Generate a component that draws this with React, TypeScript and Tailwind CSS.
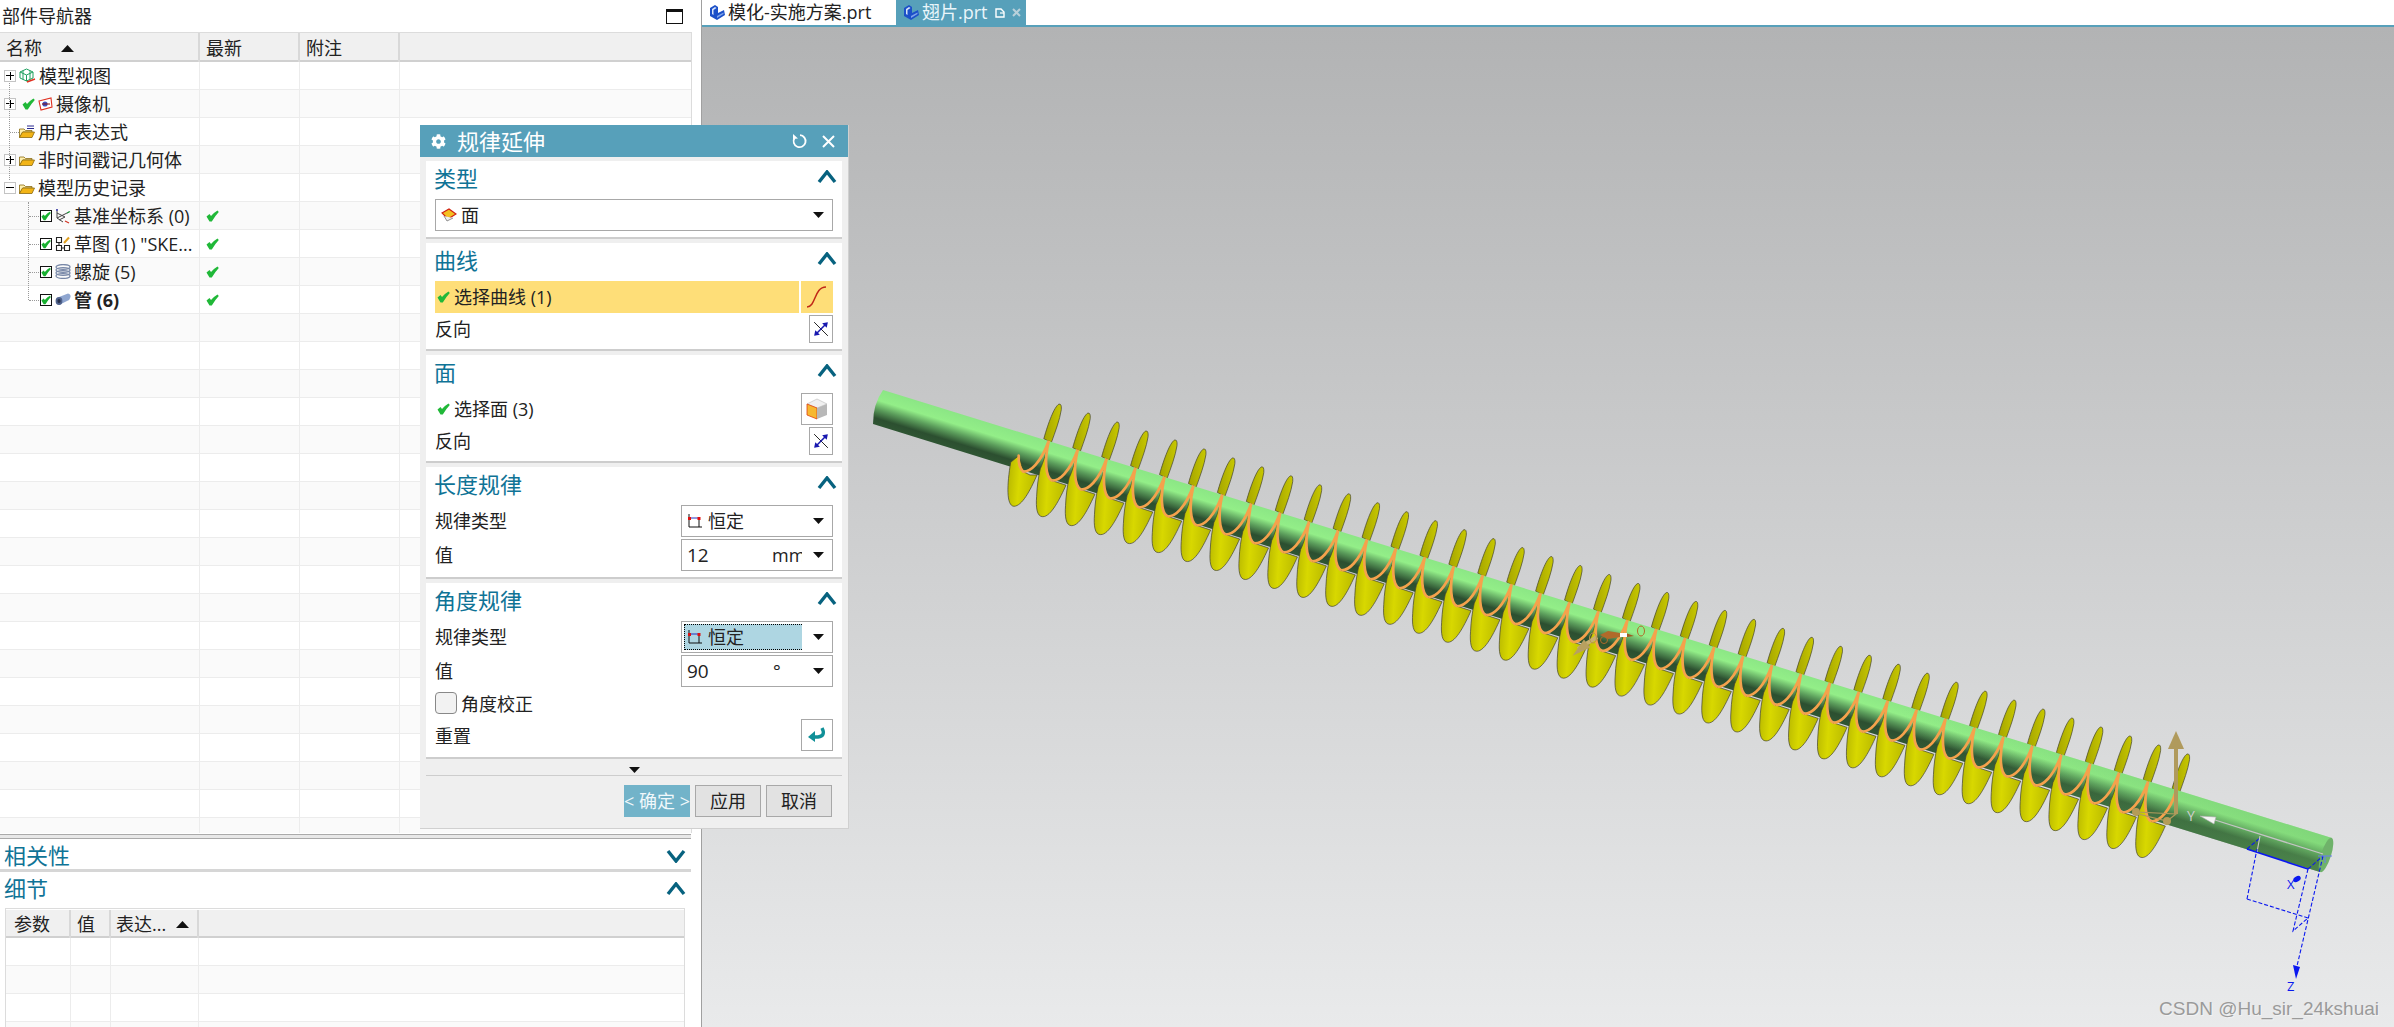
import { FaCog } from 'react-icons/fa';

const FONT = "[font-family:'Open_Sans','Noto_Sans_CJK_SC',sans-serif]";
const TICK = 'M0.5 6.5 L3.5 4 L5 6 Q8 2.5 11.5 0.5 L12.8 2 Q9 6 5.8 11.5 L3.5 11.5 Z';

const Check = ({ className = '' }: { className?: string }) => (
  <svg width="13" height="12" viewBox="0 0 13 12" className={`shrink-0 ${className}`}>
    <path d={TICK} fill="#20b838" />
  </svg>
);

const Expander = ({ open }: { open?: boolean }) => (
  <span className="relative flex h-[12px] w-[12px] shrink-0 items-center justify-center border border-[#c4c4c4] bg-white">
    <span className="h-px w-[8px] bg-black" />
    {!open && <span className="absolute h-[8px] w-px bg-black" />}
  </span>
);

const CheckBox = () => (
  <span className="flex h-[12px] w-[12px] shrink-0 items-center justify-center border border-[#111] bg-white">
    <svg width="11" height="10" viewBox="0 0 13 12">
      <path d={TICK} fill="#18b030" />
    </svg>
  </span>
);

const Folder = ({ lines }: { lines?: boolean }) => (
  <svg width="16" height="14" viewBox="0 0 16 14" className="shrink-0">
    {lines && <path d="M8 1 H15 M8 3.5 H15" stroke="#2a2a90" strokeWidth="1" />}
    <path d="M0.5 12.5 V4 H5 L6.5 5.5 H13 V7 H4 Z" fill="#fff0b0" stroke="#8a6a10" strokeWidth="0.8" />
    <path d="M0.5 12.5 L3.5 7 H15.5 L13 12.5 Z" fill="#f2b416" stroke="#8a6a10" strokeWidth="0.8" />
  </svg>
);

const ViewIcon = () => (
  <svg width="17" height="16" viewBox="0 0 17 16" className="shrink-0">
    <path d="M7.5 1 L14 4 V10 L7.5 13 L1 10 V4 Z M1 4 L7.5 7 L14 4 M7.5 7 V13 M4 2.5 V11.5 M11 2.5 V11.5" fill="none" stroke="#20a060" strokeWidth="1" />
    <path d="M8 14 L16 11" stroke="#e03020" strokeWidth="1.6" />
  </svg>
);

const CameraIcon = () => (
  <svg width="15" height="14" viewBox="0 0 15 14" className="shrink-0">
    <path d="M1 4 L13 1 L14 10 L3 13 Z" fill="#fff" stroke="#e03020" strokeWidth="1.1" />
    <circle cx="7" cy="7" r="2.6" fill="#4050c0" />
    <path d="M4 7 H12" stroke="#801010" strokeWidth="1" />
  </svg>
);

const DatumIcon = () => (
  <svg width="16" height="16" viewBox="0 0 16 16" className="shrink-0">
    <path d="M2 1 V10 L8 14 M2 10 L14 4 M2 5 L10 9 L4 12" fill="none" stroke="#444" strokeWidth="1" />
    <path d="M2 1 V3" stroke="#3030c0" strokeWidth="1.2" />
    <path d="M12 5 L15 3.5" stroke="#20a040" strokeWidth="1.2" />
    <path d="M10 13 L14 15" stroke="#d03020" strokeWidth="1.2" />
  </svg>
);

const SketchIcon = () => (
  <svg width="16" height="16" viewBox="0 0 16 16" className="shrink-0">
    <path d="M1.5 1.5 H6.5 V6.5 H1.5 Z M1.5 9.5 H6.5 V14.5 H1.5 Z M9.5 9.5 H14.5 V14.5 H9.5 Z M4 6.5 V9.5 M6.5 12 H9.5" fill="none" stroke="#222" strokeWidth="1.1" />
    <path d="M9 7 L14 1.5" stroke="#e0a020" strokeWidth="2" />
  </svg>
);

const HelixIcon = () => (
  <svg width="16" height="15" viewBox="0 0 16 15" className="shrink-0">
    {[3, 6, 9, 12].map(y => (
      <ellipse key={y} cx="8" cy={y} rx="7" ry="2.4" fill="none" stroke="#7888a8" strokeWidth="1.3" />
    ))}
  </svg>
);

const TubeIcon = () => (
  <svg width="16" height="13" viewBox="0 0 16 13" className="shrink-0">
    <path d="M4 4 L13 0.5 Q16 1 15.5 4 Q15 7 12 8 L4 12 Z" fill="#8fa6d0" />
    <ellipse cx="4" cy="8" rx="3.4" ry="4" fill="#50628c" />
    <ellipse cx="4" cy="8" rx="1.6" ry="2" fill="#26304c" />
  </svg>
);

const Triangle = ({ className = '' }: { className?: string }) => (
  <svg width="11" height="6" viewBox="0 0 11 6" className={`shrink-0 ${className}`}>
    <path d="M0 0 H11 L5.5 6 Z" fill="#111" />
  </svg>
);

const SortUp = ({ className = '' }: { className?: string }) => (
  <svg width="13" height="7" viewBox="0 0 13 7" className={className}>
    <path d="M0 7 H13 L6.5 0 Z" fill="#111" />
  </svg>
);

const Chevron = ({ down }: { down?: boolean }) => (
  <svg width="20" height="14" viewBox="0 0 20 14">
    <path d={down ? 'M2 2 L10 12 L18 2' : 'M2 12 L10 2 L18 12'} fill="none" stroke="#07627f" strokeWidth="3.4" />
  </svg>
);

const LawIcon = () => (
  <svg width="16" height="16" viewBox="0 0 16 16" className="shrink-0">
    <path d="M2 1 V14 H15" fill="none" stroke="#111" strokeWidth="1" />
    <path d="M12 5 V14" fill="none" stroke="#111" strokeWidth="1" />
    <path d="M2 5 H12" stroke="#2030c0" strokeWidth="1" />
    <rect x="1" y="4" width="3" height="3" fill="#e01010" />
    <rect x="10.5" y="4" width="3" height="3" fill="#e01010" />
  </svg>
);

const FaceIcon = () => (
  <svg width="16" height="14" viewBox="0 0 16 14" className="shrink-0">
    <path d="M1 5 L8 1 L15 6 L7 11 Z" fill="#f4c020" stroke="#d02010" strokeWidth="1.2" />
    <path d="M3 8 L6 13 L12 10" fill="#eee" stroke="#777" strokeWidth="0.8" />
  </svg>
);

const ReverseBtn = () => (
  <span className="flex h-[28px] w-[24px] items-center justify-center border border-[#a8a8a8] bg-white">
    <svg width="16" height="16" viewBox="0 0 14 14">
      <path d="M1 1 L13 13" stroke="#111" strokeWidth="0.8" />
      <path d="M2 12 L12 2" stroke="#1818b0" strokeWidth="1.3" />
      <path d="M13 1 L8 2 L12 6 Z M1 13 L6 12 L2 8 Z" fill="#1818b0" />
    </svg>
  </span>
);

const Select = ({ children }: { children: React.ReactNode }) => (
  <div className="flex h-[32px] w-[152px] items-center border border-[#a8a8a8] bg-white pr-[8px]">
    <div className="flex h-full min-w-0 flex-1 items-center overflow-hidden">{children}</div>
    <Triangle className="ml-[11px]" />
  </div>
);

const Section = ({ title, children }: { title: string; children: React.ReactNode }) => (
  <section className="mt-[4px] border-b-2 border-[#cdcdcd] bg-white pb-[6px]">
    <div className="flex h-[38px] items-start justify-between pl-[8px] pr-[5px] pt-[3px]">
      <span className="text-[22px] leading-[28px] text-[#0f7396]">{title}</span>
      <span className="pt-[6px]"><Chevron /></span>
    </div>
    <div className="flex flex-col gap-[2px] pl-[9px] pr-[9px]">{children}</div>
  </section>
);

const treeRows = [
  { indent: 'pl-[4px]', exp: 'plus', icon: <ViewIcon />, label: '模型视图' },
  { indent: 'pl-[4px]', exp: 'plus', check: true, icon: <CameraIcon />, label: '摄像机' },
  { indent: 'pl-[19px]', icon: <Folder lines />, label: '用户表达式' },
  { indent: 'pl-[4px]', exp: 'plus', icon: <Folder />, label: '非时间戳记几何体' },
  { indent: 'pl-[4px]', exp: 'minus', icon: <Folder />, label: '模型历史记录' },
  { indent: 'pl-[40px]', box: true, icon: <DatumIcon />, label: '基准坐标系 (0)', ok: true },
  { indent: 'pl-[40px]', box: true, icon: <SketchIcon />, label: '草图 (1) "SKE...', ok: true },
  { indent: 'pl-[40px]', box: true, icon: <HelixIcon />, label: '螺旋 (5)', ok: true },
  { indent: 'pl-[40px]', box: true, icon: <TubeIcon />, label: '管 (6)', ok: true, bold: true },
];

const rowIds = Array.from({ length: 28 }, (_, i) => i);

function Navigator() {
  return (
    <aside className="flex h-full w-[702px] shrink-0 flex-col border-r border-[#a0a0a0] bg-white">
      <div className="flex h-[32px] shrink-0 items-center justify-between pl-[2px] pr-[18px] pt-px text-[18px] text-[#222]">
        <span>部件导航器</span>
        <span className="h-[15px] w-[17px] border border-t-[3px] border-[#111]" />
      </div>
      <div className="flex h-[801px] w-[692px] flex-col overflow-hidden border-r border-t border-[#dcdcdc]">
        <div className="grid h-[29px] shrink-0 grid-cols-[200px_100px_100px_1fr] border-b-2 border-[#d0d0d0] bg-[#f0f0f0] text-[18px] text-[#222]">
          <div className="flex items-center border-r-2 border-[#d8d8d8] pl-[6px] pt-[2px]">
            <span>名称</span>
            <SortUp className="ml-[19px]" />
          </div>
          <div className="flex items-center border-r-2 border-[#d8d8d8] pl-[6px] pt-[2px]">最新</div>
          <div className="flex items-center border-r-2 border-[#d8d8d8] pl-[6px] pt-[2px]">附注</div>
          <div />
        </div>
        <div className="relative flex-1">
          {rowIds.map(i => {
            const r = treeRows[i];
            return (
              <div key={i} className={`grid h-[28px] grid-cols-[200px_100px_100px_1fr] border-b border-[#ececec] text-[18px] text-[#222] ${i % 2 ? 'bg-[#fafafa]' : 'bg-white'}`}>
                <div className={`flex items-center gap-[3px] overflow-hidden whitespace-nowrap border-r border-[#ececec] ${r ? r.indent : ''}`}>
                  {r && r.exp && <Expander open={r.exp === 'minus'} />}
                  {r && r.check && <Check className="ml-[3px]" />}
                  {r && r.box && <CheckBox />}
                  {r && <span className="flex shrink-0 items-center">{r.icon}</span>}
                  {r && <span className={`pt-[2px] ${r.bold ? 'font-bold' : ''}`}>{r.label}</span>}
                </div>
                <div className="flex items-center border-r border-[#ececec] pl-[6px]">
                  {r && r.ok && <Check />}
                </div>
                <div className="border-r border-[#ececec]" />
                <div />
              </div>
            );
          })}
          <div className="absolute left-[9px] top-[21px] h-[97px] border-l border-dotted border-[#999]" />
          <div className="absolute left-[10px] top-[70px] w-[9px] border-t border-dotted border-[#999]" />
          <div className="absolute left-[28px] top-[140px] h-[98px] border-l border-dotted border-[#999]" />
          <div className="absolute left-[29px] top-[154px] w-[10px] border-t border-dotted border-[#999]" />
          <div className="absolute left-[29px] top-[182px] w-[10px] border-t border-dotted border-[#999]" />
          <div className="absolute left-[29px] top-[210px] w-[10px] border-t border-dotted border-[#999]" />
          <div className="absolute left-[29px] top-[238px] w-[10px] border-t border-dotted border-[#999]" />
        </div>
      </div>
      <div className="mt-[1px] h-[5px] w-[691px] shrink-0 border-y border-[#aaaaaa] bg-[#e8e8e8]" />
      <div className="flex h-[30px] w-[691px] shrink-0 items-center justify-between pl-[4px] pr-[5px] pt-[3px] text-[22px] text-[#0f7396]">
        <span>相关性</span>
        <Chevron down />
      </div>
      <div className="h-[3px] w-[691px] shrink-0 bg-[#d6d6d6]" />
      <div className="flex h-[36px] w-[691px] shrink-0 items-center justify-between pb-[3px] pl-[4px] pr-[5px] text-[22px] text-[#0f7396]">
        <span>细节</span>
        <Chevron />
      </div>
      <div className="ml-[5px] flex w-[680px] flex-1 flex-col overflow-hidden border-x border-t border-[#dcdcdc] pt-px text-[18px] text-[#222]">
        <div className="grid h-[28px] shrink-0 grid-cols-[65px_40px_88px_1fr] border-b-2 border-[#d0d0d0] bg-[#f0f0f0]">
          <div className="flex items-center border-r-2 border-[#d8d8d8] pl-[8px] pt-px">参数</div>
          <div className="flex items-center border-r-2 border-[#d8d8d8] pl-[6px] pt-px">值</div>
          <div className="flex items-center border-r-2 border-[#d8d8d8] pl-[5px] pt-px">
            <span>表达...</span>
            <SortUp className="ml-[10px]" />
          </div>
          <div />
        </div>
        {[0, 1, 2, 3].map(i => (
          <div key={i} className={`grid h-[28px] shrink-0 grid-cols-[65px_40px_88px_1fr] border-b border-[#ececec] ${i % 2 ? 'bg-[#fafafa]' : 'bg-white'}`}>
            <div className="border-r border-[#ececec]" />
            <div className="border-r border-[#ececec]" />
            <div className="border-r border-[#ececec]" />
            <div />
          </div>
        ))}
      </div>
    </aside>
  );
}

const PartIcon = () => (
  <svg width="17" height="17" viewBox="0 0 17 17" className="shrink-0">
    <path d="M1 4 L6 1 L9 3 V9 L15 6 L16 11 L8 16 L1 12 Z" fill="#1c50c8" />
    <path d="M3 5 L6 3 L7.5 4 L4.5 6 V11 L3 10 Z" fill="#d8e4fa" />
    <path d="M8 14 L14.5 10 V8.5 L8 12 Z" fill="#7fa4ea" />
  </svg>
);

function Tabs() {
  return (
    <div className="flex h-[27px] shrink-0 items-stretch border-b-2 border-[#57a0ba] bg-white text-[18px]">
      <div className="flex w-[194px] items-center gap-[2px] pl-[7px] text-[#222]">
        <PartIcon />
        <span>模化-实施方案.prt</span>
      </div>
      <div className="flex w-[130px] items-center bg-[#57a0ba] pl-[7px] text-[#eaf6fa]">
        <PartIcon />
        <span className="ml-[2px]">翅片.prt</span>
        <svg width="10" height="10" viewBox="0 0 10 10" className="ml-[7px]">
          <path d="M1 1 H6 L9 4 V9 H1 Z" fill="none" stroke="#fff" strokeWidth="1.4" />
          <path d="M5 5 H9" stroke="#fff" strokeWidth="1.2" />
        </svg>
        <svg width="9" height="9" viewBox="0 0 9 9" className="ml-[7px]">
          <path d="M1 1 L8 8 M8 1 L1 8" stroke="#b8d0da" strokeWidth="2" />
        </svg>
      </div>
    </div>
  );
}

// one helix period, measured from the low point of the orange curve
const STEP_X = 28.93;
const STEP_Y = 8.97;
const LOBE = 'M25.5 -31 C21 -12 22 6 28.93 8.97 L42.7 13.5 C37 26 28 45 19.5 45 C13.5 45 12.5 36 13.3 25 C13.8 14 15 6 17 -3 C20 -9 23 -20 25.5 -31 Z';
const TIP = 'M20.5 -33 C25 -49 31 -65 35.5 -67.5 Q38.5 -68.5 38 -62 C36.5 -52 32 -40 28 -29 Z';
const WIRE = 'M0 0 C7 0 17 -8 25.5 -31 C21 -12 22 6 28.93 8.97';
const periods = Array.from({ length: 39 }, (_, i) => i);
const tips = Array.from({ length: 40 }, (_, i) => i);
const at = (i: number) => `translate(${1023.3 + STEP_X * i} ${472.7 + STEP_Y * i})`;

function Model() {
  return (
    <svg width="1692" height="998" viewBox="702 29 1692 998" className="block h-full w-full">
      <defs>
        <linearGradient id="pipe" gradientUnits="userSpaceOnUse" x1="883" y1="391" x2="872.6" y2="424.8">
          <stop offset="0" stopColor="#8be685" />
          <stop offset="0.32" stopColor="#93ee88" />
          <stop offset="0.56" stopColor="#5c9e5c" />
          <stop offset="0.82" stopColor="#2c4f30" />
          <stop offset="1" stopColor="#2f5533" />
        </linearGradient>
        <linearGradient id="pipeGlow" gradientUnits="userSpaceOnUse" x1="1900" y1="0" x2="2330" y2="0">
          <stop offset="0" stopColor="#6fc06a" stopOpacity="0" />
          <stop offset="1" stopColor="#6fc06a" stopOpacity="0.45" />
        </linearGradient>
        <linearGradient id="lobe" x1="0" y1="0" x2="1" y2="0.15">
          <stop offset="0" stopColor="#b4b400" />
          <stop offset="0.45" stopColor="#d8d800" />
          <stop offset="1" stopColor="#bcbc00" />
        </linearGradient>
        <linearGradient id="tip" x1="0" y1="0" x2="1" y2="0">
          <stop offset="0" stopColor="#a4a400" />
          <stop offset="1" stopColor="#c8c800" />
        </linearGradient>
      </defs>

      {tips.map(i => (
        <path key={i} d={TIP} transform={at(i)} fill="url(#tip)" stroke="#444430" strokeWidth="0.7" />
      ))}

      <path d="M883 391 L2332 839 Q2326 858 2320 873 L873 425 Q873 405 883 391 Z" fill="url(#pipe)" />
      <path d="M883 391 L2332 839 Q2326 858 2320 873 L873 425 Q873 405 883 391 Z" fill="url(#pipeGlow)" />
      <ellipse cx="2326" cy="856" rx="5" ry="18" transform="rotate(18 2326 856)" fill="#6fb26a" />

      <path d="M1018.7 456.7 L1010.7 463.3 C1007 485 1006 507 1014 507.3 C1022 507 1030 492 1037 476 L1030 476 L1023.3 472.7 Z" fill="url(#lobe)" stroke="#444430" strokeWidth="0.7" />
      {periods.map(i => (
        <path key={i} d={LOBE} transform={at(i)} fill="url(#lobe)" stroke="#444430" strokeWidth="0.7" />
      ))}

      <path d="M1018.7 456.7 Q1018 468 1023.3 472.7" fill="none" stroke="#f5a24c" strokeWidth="2.7" strokeLinecap="round" />
      {periods.map(i => (
        <path key={i} d={WIRE} transform={at(i)} fill="none" stroke="#f5a24c" strokeWidth="2.7" />
      ))}
      <path d="M2151.6 822.5 C2160 822 2170 812 2176 792" fill="none" stroke="#f5a24c" strokeWidth="2.7" />

      {/* manipulator mid way */}
      <path d="M1578 650 L1597 638" stroke="#c8b070" strokeWidth="4" />
      <path d="M1577 653 L1584 643 L1588 648 Z" fill="#b8a060" stroke="#b8a060" strokeWidth="3" />
      <path d="M1600 636 L1608 632 L1620 634 V638 L1608 640 Z" fill="#b06a2a" />
      <path d="M1620 636 H1627" stroke="#fff" strokeWidth="4" />
      <path d="M1627 634.5 L1634 637 L1627 638 Z" fill="#a05a20" />
      <ellipse cx="1593" cy="639" rx="3.5" ry="5" fill="none" stroke="#b89050" />
      <ellipse cx="1604" cy="641" rx="3.5" ry="3.5" fill="none" stroke="#b06a2a" />
      <ellipse cx="1641" cy="632" rx="3.5" ry="5" fill="none" stroke="#b06a2a" />

      {/* manipulator at the pipe end */}
      <path d="M2176 815 V750" stroke="#b09a5c" strokeWidth="4" />
      <path d="M2176 732 L2184 750 H2168 Z" fill="#b09a5c" />
      <path d="M2136 813 L2176 815 L2167 822 L2138 815" fill="none" stroke="#b09a5c" strokeWidth="1.2" />
      <circle cx="2136" cy="813" r="4" fill="#b49c58" />
      <circle cx="2167" cy="822" r="4" fill="#b49c58" />

      {/* wcs */}
      <path d="M2323 855 L2215 821" stroke="#c4c4c4" strokeWidth="1.3" />
      <path d="M2200 817 L2216 818 L2214 825 Z" fill="#f4f4f4" stroke="#aaa" strokeWidth="0.6" />
      <text x="2187" y="822" fontSize="14" fill="#d0d0d0">Y</text>
      <path d="M2247 850 L2260 839" stroke="#0a18f0" strokeWidth="1.2" strokeDasharray="4 2" />
      <path d="M2247 850 L2308 870" stroke="#0a18f0" strokeWidth="1.6" />
      <path d="M2260 837 L2257 853" stroke="#c8c8c8" strokeWidth="1.2" />
      <path d="M2247 900 L2257 850 M2247 900 L2308 919 M2308 870 L2293 932 L2308 919 M2323 857 L2297 967 M2308 870 L2323 857" fill="none" stroke="#0a18f0" strokeWidth="1.1" strokeDasharray="4 2" />
      <path d="M2296 980 L2293 966 L2300 968 Z" fill="#0a18f0" />
      <ellipse cx="2297" cy="880" rx="4" ry="2.6" transform="rotate(-30 2297 880)" fill="#0a18f0" />
      <text x="2287" y="890" fontSize="13" fill="#0a18f0">X</text>
      <text x="2287" y="992" fontSize="13" fill="#0a18f0">Z</text>
      <path d="M2318 857 H2332 M2325 857 V864" stroke="#6a7cf0" strokeWidth="1" />
    </svg>
  );
}

function Dialog() {
  return (
    <div className="absolute left-[420px] top-[125px] flex h-[704px] w-[429px] flex-col border-b border-r border-[#d0d0d0] bg-[#efefef] text-[18px] text-[#222]">
      <div className="flex h-[32px] shrink-0 items-center bg-[#57a0ba] pl-[11px] pr-[13px] text-white">
        <FaCog size={15} />
        <span className="ml-[11px] text-[22px] leading-none">规律延伸</span>
        <svg width="16" height="16" viewBox="0 0 16 16" className="ml-auto">
          <path d="M2.5 5 A6 6 0 1 0 8 2.2" fill="none" stroke="#fff" strokeWidth="1.8" />
          <path d="M1 1 L6 5.5 L1 6 Z" fill="#fff" />
        </svg>
        <svg width="13" height="13" viewBox="0 0 13 13" className="ml-[14px]">
          <path d="M1 1 L12 12 M12 1 L1 12" stroke="#fff" strokeWidth="2" />
        </svg>
      </div>
      <div className="flex flex-1 flex-col pl-[6px] pr-[6px]">
        <Section title="类型">
          <div className="flex h-[32px] items-center border border-[#a8a8a8] bg-white pl-[5px] pr-[8px]">
            <FaceIcon />
            <span className="ml-[4px]">面</span>
            <Triangle className="ml-auto" />
          </div>
        </Section>
        <Section title="曲线">
          <div className="flex h-[32px] gap-[2px]">
            <div className="flex flex-1 items-center bg-[#fede78] pl-[2px]">
              <Check />
              <span className="ml-[4px]">选择曲线 (1)</span>
            </div>
            <div className="flex w-[32px] items-center justify-center bg-[#fede78]">
              <svg width="22" height="24" viewBox="0 0 22 24">
                <path d="M1 22 C10 22 8 2 20 2" fill="none" stroke="#c02818" strokeWidth="1.5" />
              </svg>
            </div>
          </div>
          <div className="flex items-center justify-between">
            <span>反向</span>
            <ReverseBtn />
          </div>
        </Section>
        <Section title="面">
          <div className="flex h-[32px] items-center justify-between">
            <div className="flex items-center pl-[2px]">
              <Check />
              <span className="ml-[4px]">选择面 (3)</span>
            </div>
            <span className="flex h-[32px] w-[32px] items-center justify-center border border-[#a8a8a8] bg-white">
              <svg width="22" height="22" viewBox="0 0 22 22">
                <path d="M1 6 L11 1 L21 6 L11 10 Z" fill="#f0f0f0" stroke="#bbb" strokeWidth="0.6" />
                <path d="M1 6 L11 10 V21 L1 17 Z" fill="#f6b830" stroke="#e04010" strokeWidth="0.8" />
                <path d="M21 6 L11 10 V21 L21 17 Z" fill="#b8b8b8" />
              </svg>
            </span>
          </div>
          <div className="flex items-center justify-between">
            <span>反向</span>
            <ReverseBtn />
          </div>
        </Section>
        <Section title="长度规律">
          <div className="flex items-center justify-between">
            <span className="pt-px">规律类型</span>
            <Select>
              <span className="ml-[5px]"><LawIcon /></span>
              <span className="ml-[5px] pt-px">恒定</span>
            </Select>
          </div>
          <div className="flex items-center justify-between">
            <span className="pt-px">值</span>
            <Select>
              <span className="ml-[5px] w-[85px] shrink-0 text-[19px]">12</span>
              <span className="w-[31px] shrink-0 overflow-hidden pt-px">mm</span>
            </Select>
          </div>
        </Section>
        <Section title="角度规律">
          <div className="flex items-center justify-between">
            <span className="pt-px">规律类型</span>
            <Select>
              <div className="ml-[2px] flex h-[26px] w-[120px] shrink-0 items-center border border-dotted border-black bg-[#aed6e2] pl-[2px]">
                <LawIcon />
                <span className="ml-[5px] pt-px">恒定</span>
              </div>
            </Select>
          </div>
          <div className="flex items-center justify-between">
            <span className="pt-px">值</span>
            <Select>
              <span className="ml-[5px] w-[86px] shrink-0 text-[19px]">90</span>
              <span className="shrink-0">°</span>
            </Select>
          </div>
          <div className="mt-[3px] flex h-[22px] items-center">
            <span className="h-[22px] w-[22px] rounded-[4px] border border-[#888] bg-[#f2f2f2]" />
            <span className="ml-[4px] pt-[2px]">角度校正</span>
          </div>
          <div className="mt-[3px] flex items-center justify-between">
            <span className="pt-[2px]">重置</span>
            <span className="flex h-[32px] w-[32px] items-center justify-center border border-[#a8a8a8] bg-white">
              <svg width="20" height="16" viewBox="0 0 20 16">
                <path d="M15 1 Q19 9 11 10 H7" fill="none" stroke="#109098" strokeWidth="3.4" />
                <path d="M8 4 L1 10 L8 15 Z" fill="#109098" />
              </svg>
            </span>
          </div>
        </Section>
        <div className="flex h-[17px] shrink-0 items-center justify-center border-b border-[#cdcdcd] pt-[5px]">
          <Triangle />
        </div>
        <div className="mt-[9px] flex h-[32px] shrink-0 justify-end gap-[5px] pr-[10px]">
          <button className="flex w-[66px] items-center justify-between bg-[#72b3c9] pt-px text-[#f0f8fb]">
            <span>&lt;</span>
            <span>确定</span>
            <span>&gt;</span>
          </button>
          <button className="w-[66px] border border-[#a8a8a8] bg-[#e2e2e2] pt-px">应用</button>
          <button className="w-[66px] border border-[#a8a8a8] bg-[#e2e2e2] pt-px">取消</button>
        </div>
      </div>
    </div>
  );
}

export default function App() {
  return (
    <div className={`relative flex h-[1027px] w-[2394px] overflow-hidden bg-white ${FONT}`}>
      <Navigator />
      <main className="flex min-w-0 flex-1 flex-col">
        <Tabs />
        <div className="relative flex-1 bg-gradient-to-b from-[#b2b3b4] to-[#e9eaeb]">
          <Model />
          <span className="absolute bottom-[9px] right-[15px] font-['Liberation_Sans'] text-[19px] leading-none text-[#9a9a9a] [text-shadow:1px_1px_0_#f2f2f2]">
            CSDN @Hu_sir_24kshuai
          </span>
        </div>
      </main>
      <Dialog />
    </div>
  );
}
